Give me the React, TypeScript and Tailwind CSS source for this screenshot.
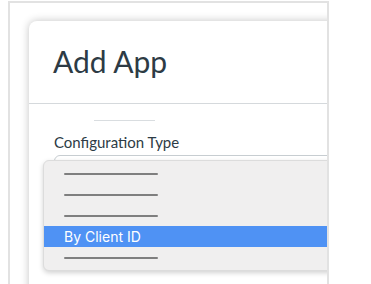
export default function App() {
  const rows = ["", "", "", "By Client ID", ""];
  return (
    <div className="w-[371px] h-[284px] bg-white overflow-hidden">
      <div className="ml-[8px] mt-[1px] w-[321px] h-[290px] border-2 border-b-0 border-[#e2e2e2] overflow-hidden pl-[19px] pt-[18px]">
        <div
          className="relative w-[400px] h-[300px] bg-white rounded-tl-lg shadow-[0_0_8px_rgba(0,0,0,0.24)] text-[#2d3b45]"
          style={{ fontFamily: "Lato, 'Open Sans', sans-serif" }}
        >
          <div className="h-[83px] border-b border-[#d5d9dc] pl-[24px] pt-[22px]">
            <h1 className="text-[30px] leading-[36px] font-normal">Add App</h1>
          </div>
          <div className="pl-[25px]">
            <div className="mt-[16px] ml-[40px] w-[61px] h-px bg-[#d9dde0]" />
            <div className="mt-[11px] text-[15px] leading-[20px]">Configuration Type</div>
            <div className="mt-[3px] h-[38px] rounded-md border border-[#c7cdd1] bg-white" />
          </div>

          {/* native select popup */}
          <div
            className="absolute left-[14px] top-[139px] w-[320px] rounded-md bg-[#f0efef] border border-[#dcdcdc] shadow-[0_2px_5px_rgba(0,0,0,0.18)] py-[2px]"
            style={{ fontFamily: "Inter, 'Liberation Sans', sans-serif" }}
          >
            {rows.map((r, i) =>
              r ? (
                <div key={i} className="h-[21px] bg-[#4f92f4] text-white text-[14px] leading-[21px] pl-[20px]">
                  {r}
                </div>
              ) : (
                <div key={i} className="h-[21px] flex items-center pl-[20px]">
                  <div className="w-[94px] h-[2px] rounded-full bg-[#7f7f7f]" />
                </div>
              )
            )}
          </div>
        </div>
      </div>
    </div>
  );
}
